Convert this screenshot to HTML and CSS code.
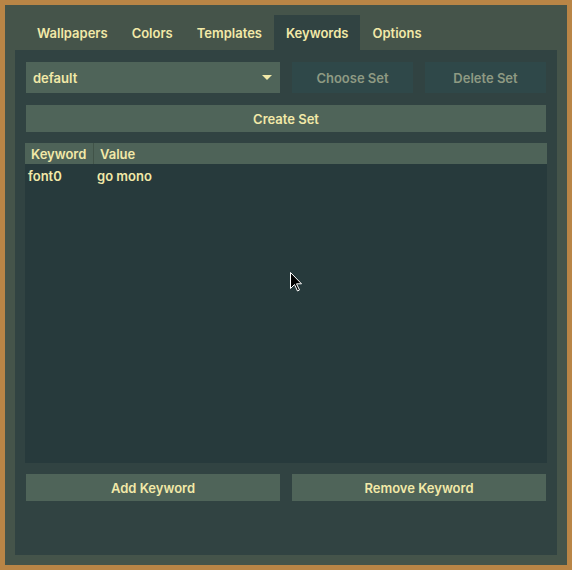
FILE: index.html
```html
<!DOCTYPE html>
<html>
<head>
<meta charset="utf-8">
<link rel="stylesheet" href="styles.css">
</head>
<body>
<div class="window">
  <div class="tabs">
    <div class="tab">Wallpapers</div>
    <div class="tab">Colors</div>
    <div class="tab">Templates</div>
    <div class="tab active">Keywords</div>
    <div class="tab">Options</div>
  </div>
  <div class="panel">
    <div class="toprow">
      <div class="select">
        <span>default</span>
        <svg class="caret" width="10" height="5" viewBox="0 0 10 5"><path d="M0 0H10L5 5Z" fill="#f2e9a8"/></svg>
      </div>
      <div class="btn disabled">Choose Set</div>
      <div class="btn disabled">Delete Set</div>
    </div>
    <div class="btn wide">Create Set</div>
    <div class="table">
      <div class="thead">
        <div class="th c1">Keyword</div>
        <div class="th c2">Value</div>
      </div>
      <div class="tbody">
        <div class="tr">
          <div class="td c1">font0</div>
          <div class="td c2">go mono</div>
        </div>
      </div>
    </div>
    <div class="bottomrow">
      <div class="btn">Add Keyword</div>
      <div class="btn">Remove Keyword</div>
    </div>
  </div>
  <svg class="cursor" width="13" height="20" viewBox="0 0 13 20"><path d="M0.5 0.5V16.5L4.5 12.5L7.5 19L9.5 18L6.5 11.8H11.5Z" fill="#000" stroke="#fff" stroke-width="1"/></svg>
</div>
</body>
</html>
```
FILE: styles.css
```css
* { box-sizing: border-box; }
html, body { margin: 0; padding: 0; }
body {
  background: #b98546;
  font-family: Inter, "Noto Sans", sans-serif;
  font-weight: 600;
  font-size: 13px;
  color: #f2e9a8;
}
.window {
  position: relative;
  margin: 5px;
  width: 562px;
  height: 560px;
  background: #45544a;
  padding: 10px;
  display: flex;
  flex-direction: column;
}
.tabs {
  display: flex;
  height: 35px;
  padding-left: 10px;
}
.tab {
  padding: 0 12px;
  display: flex;
  align-items: center;
}
.tab.active { background: #314342; }
.panel {
  flex: 1;
  background: #314342;
  padding: 12px 11px;
  display: flex;
  flex-direction: column;
}
.toprow {
  display: grid;
  grid-template-columns: 254px 121px 121px;
  column-gap: 12px;
  height: 31px;
}
.select {
  background: #4f6459;
  display: flex;
  align-items: center;
  justify-content: space-between;
  padding: 0 8px 0 7px;
}
.caret { display: block; }
.btn {
  background: #4f6459;
  display: flex;
  align-items: center;
  justify-content: center;
  height: 27px;
}
.toprow .btn { height: 31px; }
.btn.disabled {
  background: #2f4849;
  color: #8e9a83;
}
.wide { margin-top: 12px; }
.table {
  margin: 11px -1px 0;
  height: 320px;
  background: #273a3c;
  display: flex;
  flex-direction: column;
}
.thead {
  display: flex;
  height: 21px;
  background: #4e6358;
}
.th {
  display: flex;
  align-items: center;
  padding-left: 6px;
}
.thead .c1 { width: 69px; border-right: 1px solid #415348; }
.tr {
  display: flex;
  height: 24px;
  align-items: center;
}
.td { padding-left: 3px; }
.tr .c1 { width: 69px; }
.tr .c2 { padding-left: 3px; }
.bottomrow {
  margin-top: 11px;
  display: grid;
  grid-template-columns: 254px 254px;
  column-gap: 12px;
}
.cursor {
  position: absolute;
  left: 285px;
  top: 267px;
}
```
